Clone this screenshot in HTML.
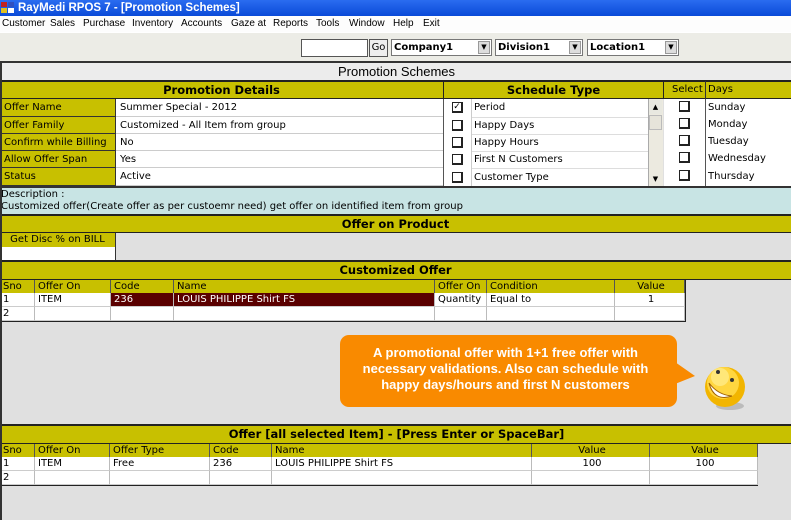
<!DOCTYPE html>
<html><head><meta charset="utf-8"><style>
*{margin:0;padding:0;box-sizing:border-box}
body{width:791px;height:520px;position:relative;overflow:hidden;background:#e0e0e0;font-family:"DejaVu Sans","Liberation Sans",sans-serif;font-size:10px;color:#000}
div{position:absolute;white-space:nowrap}
.y{background:#c8c000}
.w{background:#fff}
.hd{font-weight:bold;font-size:11.5px;text-align:center;line-height:17px;border-top:2px solid #222;border-bottom:1px solid #222}
.c{height:14px;line-height:14px;padding-left:3px;border-right:1px solid #bbb;border-bottom:1px solid #ccc;background:#fff}
.lb{background:#c8c000;line-height:17px;padding-left:3px;border:1px solid #333;border-top:none}
.vl{background:#fff;line-height:17px;padding-left:4px;border-bottom:1px solid #ccc}
.cb{width:11px;height:11px;border:1px solid #222;background:#fff;border-bottom-width:2px;border-right-width:2px}
.th{background:#c8c000;height:13px;line-height:13px;padding-left:3px;border-right:1px solid #555}
.m span{position:absolute}
</style></head><body>
<div style="left:0;top:0;width:791px;height:16px;background:linear-gradient(#2a6cf0,#0a4ad8);color:#fff;font-weight:bold;font-size:11.5px;line-height:16px;padding-left:18px;font-family:'Liberation Sans',sans-serif">RayMedi RPOS 7 - [Promotion Schemes]</div>
<div style="left:1px;top:2px;width:6px;height:5px;background:#c02020"></div><div style="left:8px;top:2px;width:6px;height:5px;background:#3050c0"></div>
<div style="left:1px;top:8px;width:6px;height:5px;background:#e0c020"></div><div style="left:8px;top:8px;width:6px;height:5px;background:#fff"></div>
<div class="m" style="left:0;top:16px;width:791px;height:16px;background:#fdfdfd;font-family:'Liberation Sans',sans-serif;font-size:10px;line-height:16px">
<span style="left:2px">Customer</span><span style="left:50px">Sales</span><span style="left:83px">Purchase</span><span style="left:132px">Inventory</span><span style="left:181px">Accounts</span><span style="left:231px">Gaze at</span><span style="left:273px">Reports</span><span style="left:316px">Tools</span><span style="left:349px">Window</span><span style="left:393px">Help</span><span style="left:423px">Exit</span></div>
<div style="left:0;top:32px;width:791px;height:29px;background:#ecece6;border-top:1px solid #fff"></div>
<div style="left:301px;top:39px;width:67px;height:18px;background:#fff;border:1px solid #555"></div>
<div style="left:369px;top:39px;width:19px;height:18px;background:#eee;border:1px solid #555;font-size:10px;line-height:16px;text-align:center">Go</div>
<div style="left:391px;top:39px;width:101px;height:17px;background:#fff;border:1px solid #777;font-weight:bold;font-size:10px;line-height:15px;padding-left:2px">Company1</div>
<div style="left:478px;top:41px;width:12px;height:13px;background:#ddd;border:1px solid #999;font-size:7px;line-height:11px;text-align:center">▼</div>
<div style="left:495px;top:39px;width:88px;height:17px;background:#fff;border:1px solid #777;font-weight:bold;font-size:10px;line-height:15px;padding-left:2px">Division1</div>
<div style="left:569px;top:41px;width:12px;height:13px;background:#ddd;border:1px solid #999;font-size:7px;line-height:11px;text-align:center">▼</div>
<div style="left:587px;top:39px;width:92px;height:17px;background:#fff;border:1px solid #777;font-weight:bold;font-size:10px;line-height:15px;padding-left:2px">Location1</div>
<div style="left:665px;top:41px;width:12px;height:13px;background:#ddd;border:1px solid #999;font-size:7px;line-height:11px;text-align:center">▼</div>
<div style="left:0;top:61px;width:791px;height:20px;background:#ececec;border-top:2px solid #333;border-left:2px solid #333;font-size:13px;line-height:18px;text-align:center;font-family:'Liberation Sans',sans-serif">Promotion Schemes</div>
<div class="y hd" style="left:0;top:80px;width:443px;height:19px">Promotion Details</div>
<div class="y hd" style="left:443px;top:80px;width:220px;height:19px;border-left:1px solid #222">Schedule Type</div>
<div class="y" style="left:663px;top:80px;width:128px;height:19px;border-top:2px solid #222;border-left:1px solid #222;border-bottom:1px solid #222;line-height:16px;padding-left:8px">Select</div>
<div style="left:705px;top:81px;width:1px;height:106px;background:#333"></div>
<div style="left:708px;top:80px;line-height:19px">Days</div>
<div style="left:0;top:99px;width:443px;height:88px;background:#fff"></div>
<div class="lb" style="left:0;top:99px;width:116px;height:18px">Offer Name</div>
<div class="lb" style="left:0;top:117px;width:116px;height:17px">Offer Family</div>
<div class="lb" style="left:0;top:134px;width:116px;height:17px">Confirm while Billing</div>
<div class="lb" style="left:0;top:151px;width:116px;height:17px">Allow Offer Span</div>
<div class="lb" style="left:0;top:168px;width:116px;height:18px">Status</div>
<div class="vl" style="left:116px;top:99px;width:327px;height:18px">Summer Special - 2012</div>
<div class="vl" style="left:116px;top:117px;width:327px;height:17px">Customized - All Item from group</div>
<div class="vl" style="left:116px;top:134px;width:327px;height:17px">No</div>
<div class="vl" style="left:116px;top:151px;width:327px;height:17px">Yes</div>
<div class="vl" style="left:116px;top:168px;width:327px;height:18px">Active</div>
<div style="left:443px;top:99px;width:220px;height:88px;background:#fff;border-left:1px solid #555"></div>
<div style="left:471px;top:99px;width:1px;height:88px;background:#ccc"></div>
<div style="left:648px;top:99px;width:15px;height:88px;background:#eceae0;border-left:1px solid #aaa"></div>
<div style="left:649px;top:100px;width:13px;height:14px;background:#e8e8e0;font-size:7px;text-align:center;line-height:14px">▲</div>
<div style="left:649px;top:115px;width:13px;height:15px;background:#e6e4da;border:1px solid #bbb"></div>
<div style="left:649px;top:172px;width:13px;height:14px;font-size:7px;text-align:center;line-height:14px">▼</div>
<div class="cb" style="left:452px;top:102px;font-size:9px;line-height:8px;text-align:center">✓</div>
<div class="cb" style="left:452px;top:120px"></div><div class="cb" style="left:452px;top:137px"></div><div class="cb" style="left:452px;top:154px"></div><div class="cb" style="left:452px;top:172px"></div>
<div style="left:474px;top:99px;line-height:18px">Period</div>
<div style="left:474px;top:117px;line-height:18px">Happy Days</div>
<div style="left:474px;top:134px;line-height:18px">Happy Hours</div>
<div style="left:474px;top:151px;line-height:18px">First N Customers</div>
<div style="left:474px;top:169px;line-height:18px">Customer Type</div>
<div style="left:472px;top:117px;width:176px;height:1px;background:#ddd"></div><div style="left:472px;top:134px;width:176px;height:1px;background:#ddd"></div><div style="left:472px;top:151px;width:176px;height:1px;background:#ddd"></div><div style="left:472px;top:168px;width:176px;height:1px;background:#ddd"></div>
<div style="left:664px;top:99px;width:127px;height:88px;background:#fff"></div>
<div style="left:705px;top:99px;width:1px;height:88px;background:#555"></div>
<div class="cb" style="left:679px;top:101px"></div><div class="cb" style="left:679px;top:118px"></div><div class="cb" style="left:679px;top:135px"></div><div class="cb" style="left:679px;top:152px"></div><div class="cb" style="left:679px;top:170px"></div>
<div style="left:708px;top:99px;line-height:17px">Sunday</div>
<div style="left:708px;top:116px;line-height:17px">Monday</div>
<div style="left:708px;top:133px;line-height:17px">Tuesday</div>
<div style="left:708px;top:150px;line-height:17px">Wednesday</div>
<div style="left:708px;top:168px;line-height:17px">Thursday</div>
<div style="left:0;top:186px;width:791px;height:29px;background:#c8e4e4;border-top:2px solid #333;line-height:12px;padding-left:1px;padding-top:1px">Description :<br>Customized offer(Create offer as per custoemr need) get offer on identified item from group</div>
<div class="y hd" style="left:0;top:214px;width:791px;height:19px">Offer on Product</div>
<div class="y" style="left:0;top:233px;width:116px;height:14px;border-right:1px solid #333;line-height:14px;text-align:center">Get Disc % on BILL</div>
<div class="w" style="left:0;top:247px;width:116px;height:14px;border-right:1px solid #333"></div>
<div class="y hd" style="left:0;top:260px;width:791px;height:20px">Customized Offer</div>
<div style="left:0;top:280px;width:686px;height:42px;background:#fff;border-right:1px solid #222;border-bottom:1px solid #222"></div>
<div class="th" style="left:0;top:280px;width:35px">Sno</div>
<div class="th" style="left:35px;top:280px;width:76px">Offer On</div>
<div class="th" style="left:111px;top:280px;width:63px">Code</div>
<div class="th" style="left:174px;top:280px;width:261px">Name</div>
<div class="th" style="left:435px;top:280px;width:52px">Offer On</div>
<div class="th" style="left:487px;top:280px;width:128px">Condition</div>
<div class="th" style="left:615px;top:280px;width:70px;text-align:center">Value</div>
<div class="c" style="left:0;top:293px;width:35px">1</div>
<div class="c" style="left:35px;top:293px;width:76px">ITEM</div>
<div class="c" style="left:111px;top:293px;width:63px;background:#5a0000;color:#fff">236</div>
<div class="c" style="left:174px;top:293px;width:261px;background:#5a0000;color:#fff">LOUIS PHILIPPE Shirt FS</div>
<div class="c" style="left:435px;top:293px;width:52px">Quantity</div>
<div class="c" style="left:487px;top:293px;width:128px">Equal to</div>
<div class="c" style="left:615px;top:293px;width:70px;text-align:center">1</div>
<div class="c" style="left:0;top:307px;width:35px">2</div>
<div class="c" style="left:35px;top:307px;width:76px"></div><div class="c" style="left:111px;top:307px;width:63px"></div><div class="c" style="left:174px;top:307px;width:261px"></div><div class="c" style="left:435px;top:307px;width:52px"></div><div class="c" style="left:487px;top:307px;width:128px"></div><div class="c" style="left:615px;top:307px;width:70px"></div>
<div style="left:340px;top:335px;width:337px;height:72px;background:#f98a00;border-radius:9px;color:#fff;font-family:'Liberation Sans',sans-serif;font-weight:bold;font-size:13px;line-height:16px;text-align:center;white-space:normal;padding:10px 20px 0 14px">A promotional offer with 1+1 free offer with necessary validations. Also can schedule with happy days/hours and first N customers</div>
<svg style="position:absolute;left:670px;top:350px" width="90" height="70">
<polygon points="5,12 25,26 5,34" fill="#f98a00"/>
<ellipse cx="60" cy="56" rx="14" ry="4" fill="#bbb"/>
<circle cx="55" cy="37" r="20" fill="#f2b500"/>
<circle cx="53" cy="33" r="16" fill="#ffd640"/>
<circle cx="50" cy="27" r="9" fill="#fff2a0" opacity=".6"/>
<circle cx="48" cy="22" r="2" fill="#333"/><circle cx="62" cy="30" r="2" fill="#333"/>
<path d="M39 33 Q44 52 62 46 Q48 45 39 33Z" fill="#fff" stroke="#a06000" stroke-width="1"/>
</svg>
<div class="y hd" style="left:0;top:424px;width:791px;height:20px;border-left:2px solid #222">Offer [all selected Item] - [Press Enter or SpaceBar]</div>
<div style="left:0;top:444px;width:758px;height:42px;background:#fff;border-right:1px solid #222;border-bottom:1px solid #222"></div>
<div class="th" style="left:0;top:444px;width:35px">Sno</div>
<div class="th" style="left:35px;top:444px;width:75px">Offer On</div>
<div class="th" style="left:110px;top:444px;width:100px">Offer Type</div>
<div class="th" style="left:210px;top:444px;width:62px">Code</div>
<div class="th" style="left:272px;top:444px;width:260px">Name</div>
<div class="th" style="left:532px;top:444px;width:118px;text-align:center">Value</div>
<div class="th" style="left:650px;top:444px;width:108px;text-align:center">Value</div>
<div class="c" style="left:0;top:457px;width:35px">1</div>
<div class="c" style="left:35px;top:457px;width:75px">ITEM</div>
<div class="c" style="left:110px;top:457px;width:100px">Free</div>
<div class="c" style="left:210px;top:457px;width:62px">236</div>
<div class="c" style="left:272px;top:457px;width:260px">LOUIS PHILIPPE Shirt FS</div>
<div class="c" style="left:532px;top:457px;width:118px;text-align:center">100</div>
<div class="c" style="left:650px;top:457px;width:108px;text-align:center">100</div>
<div class="c" style="left:0;top:471px;width:35px">2</div>
<div class="c" style="left:35px;top:471px;width:75px"></div><div class="c" style="left:110px;top:471px;width:100px"></div><div class="c" style="left:210px;top:471px;width:62px"></div><div class="c" style="left:272px;top:471px;width:260px"></div><div class="c" style="left:532px;top:471px;width:118px"></div><div class="c" style="left:650px;top:471px;width:108px"></div>
<div style="left:0;top:61px;width:2px;height:459px;background:#333"></div>
</body></html>
